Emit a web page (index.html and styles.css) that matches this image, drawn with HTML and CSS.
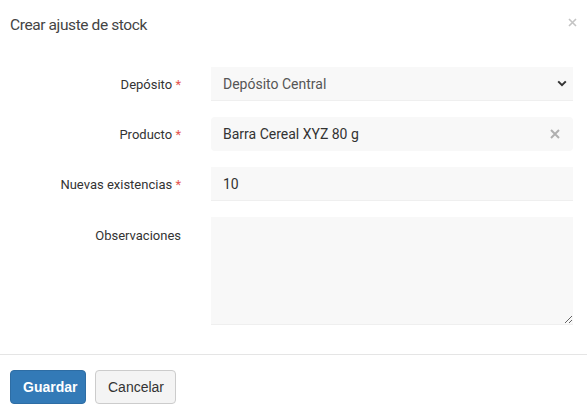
FILE: index.html
```html
<!DOCTYPE html>
<html lang="es">
<head>
  <meta charset="UTF-8">
  <meta name="viewport" content="width=device-width, initial-scale=1.0">
  <title>Crear ajuste de stock</title>
  <link rel="stylesheet" href="styles.css">
</head>
<body>
  <div class="modal">
    <!-- Header -->
    <div class="modal-header">
      <h4 class="modal-title">Crear ajuste de stock</h4>
      <button class="close" type="button" aria-label="Cerrar">
        <svg width="9" height="9" viewBox="0 0 9 9">
          <path d="M1 1L8 8M8 1L1 8" stroke="#c4c4c4" stroke-width="1.6"/>
        </svg>
      </button>
    </div>

    <!-- Form -->
    <form class="modal-body">
      <div class="form-row">
        <label>Depósito <span class="req">*</span></label>
        <div class="field field-select">
          <span class="value muted">Depósito Central</span>
          <svg width="10" height="7" viewBox="0 0 10 7">
            <path d="M1.2 1.4L5 5.2L8.8 1.4" fill="none" stroke="#333" stroke-width="2"/>
          </svg>
        </div>
      </div>

      <div class="form-row">
        <label>Producto <span class="req">*</span></label>
        <div class="field field-chosen">
          <span class="value">Barra Cereal XYZ 80 g</span>
          <svg width="10" height="10" viewBox="0 0 10 10">
            <path d="M1 1L9 9M9 1L1 9" stroke="#b0b0b0" stroke-width="2"/>
          </svg>
        </div>
      </div>

      <div class="form-row">
        <label>Nuevas existencias <span class="req">*</span></label>
        <input class="field field-input" type="text" value="10">
      </div>

      <div class="form-row">
        <label class="top">Observaciones</label>
        <textarea class="field field-text"></textarea>
      </div>
    </form>

    <!-- Footer -->
    <div class="modal-footer">
      <button class="btn btn-primary" type="button">Guardar</button>
      <button class="btn btn-default" type="button">Cancelar</button>
    </div>
  </div>
</body>
</html>
```

FILE: styles.css
```css
/* Page */
body {
  margin: 0;
  background-color: #fff;
  font-family: Roboto, "Liberation Sans", Arial, sans-serif;
  color: #333;
  overflow: hidden;
}

.modal {
  width: 587px;
  display: flex;
  flex-direction: column;
}

/* Header */
.modal-header {
  box-sizing: border-box;
  display: flex;
  justify-content: space-between;
  align-items: flex-start;
  padding: 0 10px;
  height: 37px;
}

.modal-title {
  margin: 16px 0 0;
  font-size: 15.5px;
  line-height: 18px;
  letter-spacing: -0.4px;
  font-weight: 400;
  color: #444;
}

.close {
  border: none;
  background: none;
  padding: 0;
  margin-top: 18px;
  display: flex;
}

/* Form body */
.modal-body {
  margin: 0;
  padding: 30px 14px 29px 0;
  display: flex;
  flex-direction: column;
  gap: 16px;
}

.form-row {
  display: grid;
  grid-template-columns: 181px 1fr;
  column-gap: 30px;
  align-items: center;
}

.form-row label {
  text-align: right;
  font-size: 13px;
  color: #333;
}

.form-row label.top {
  align-self: start;
  padding-top: 11px;
}

.req {
  color: #e4564f;
}

.field {
  box-sizing: border-box;
  height: 34px;
  margin: 0;
  border: none;
  background-color: #f8f8f8;
  font-family: Roboto, "Liberation Sans", Arial, sans-serif;
  font-size: 14px;
  color: #333;
  padding: 0 12px;
}

.field-select {
  display: flex;
  justify-content: space-between;
  align-items: center;
  border-bottom: 1px solid #efefef;
  padding-right: 6px;
}

.field-select .muted {
  color: #555;
}

.field-chosen {
  display: flex;
  justify-content: space-between;
  align-items: center;
  border-radius: 4px;
  padding-right: 13px;
}

.field-input {
  width: 100%;
  border-bottom: 1px solid #efefef;
  outline: none;
}

.field-text {
  display: block;
  width: 100%;
  height: 108px;
  border-bottom: 1px solid #efefef;
  outline: none;
}

/* Footer */
.modal-footer {
  border-top: 1px solid #e5e5e5;
  padding: 15px 10px 10px;
  display: flex;
  gap: 9px;
}

.btn {
  box-sizing: border-box;
  height: 34px;
  padding: 0 12px;
  border-radius: 4px;
  font-family: "Liberation Sans", Arial, sans-serif;
  font-size: 14px;
  cursor: pointer;
}

.btn-primary {
  background-color: #337ab7;
  border: 1px solid #2e6da4;
  color: #fff;
  font-weight: bold;
  width: 76px;
}

.btn-default {
  background-color: #f4f4f4;
  border: 1px solid #ccc;
  color: #333;
  width: 81px;
}
```
